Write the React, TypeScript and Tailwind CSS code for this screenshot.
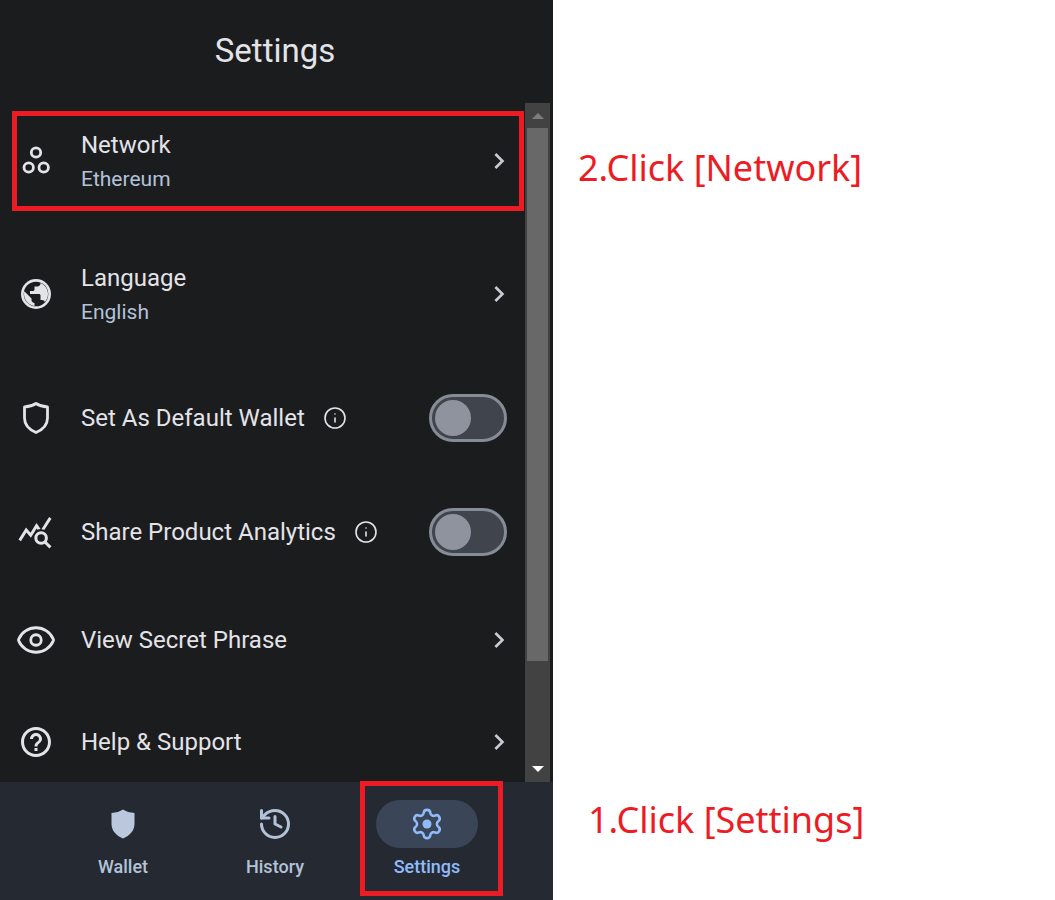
import { MdChevronRight, MdHelpOutline, MdQueryStats } from 'react-icons/md';
import { Eye, History, Info as InfoIcon } from 'lucide-react';
import { ReactNode } from 'react';

const NetworkIcon = () => (
  <svg width="30" height="30" viewBox="0 0 30 30" fill="none" stroke="#e3e3e8" strokeWidth="2.800">
    <circle cx="15" cy="6.500" r="4.700" />
    <circle cx="7.700" cy="21.500" r="4.700" />
    <circle cx="22.700" cy="21.500" r="4.700" />
  </svg>
);

const GlobeIcon = () => (
  <svg width="36" height="36" viewBox="0 0 24 24">
    <circle cx="12" cy="12" r="10" fill="#e3e3e8" />
    <circle cx="12" cy="12" r="8.200" fill="#1b1c1e" />
    <path d="M11 19.930c-3.950-.49-7-3.850-7-7.930 0-.62.08-1.210.21-1.790L9 15v1c0 1.100.9 2 2 2v1.930z" fill="#e3e3e8" />
    <path d="M17.900 17.390c-.26-.81-1-1.390-1.900-1.390h-1v-3c0-.55-.45-1-1-1H8v-2h2c.55 0 1-.45 1-1V7h2c1.100 0 2-.9 2-2v-.41c2.930 1.190 5 4.060 5 7.410 0 2.080-.8 3.970-2.100 5.390z" fill="#e3e3e8" />
  </svg>
);

const ShieldIcon = ({ filled }: { filled?: boolean }) => (
  <svg width="30" height="32" viewBox="0 0 30 32" fill={filled ? '#bac7dc' : 'none'} stroke={filled ? 'none' : '#e3e3e8'} strokeWidth="2.800" strokeLinejoin="round">
    <path d="M15 1.500c3 2 7 3.200 11.500 3.500v11c0 6.500-4.500 11.500-11.500 14.500C8 27.500 3.500 22.500 3.500 16V5C8 4.700 12 3.500 15 1.500z" />
  </svg>
);

const GearIcon = () => (
  <svg width="34" height="34" viewBox="0 0 24 24" fill="none" stroke="#90bbfb" strokeWidth="1.800" strokeLinecap="round" strokeLinejoin="round">
    <path d="M9.671 4.136a2.34 2.34 0 0 1 4.659 0 2.34 2.34 0 0 0 3.319 1.915 2.34 2.34 0 0 1 2.33 4.033 2.34 2.34 0 0 0 0 3.831 2.34 2.34 0 0 1-2.33 4.033 2.34 2.34 0 0 0-3.319 1.915 2.34 2.34 0 0 1-4.659 0 2.34 2.34 0 0 0-3.32-1.915 2.34 2.34 0 0 1-2.33-4.033 2.34 2.34 0 0 0 0-3.831A2.34 2.34 0 0 1 6.35 6.051a2.34 2.34 0 0 0 3.319-1.915" />
    <circle cx="12" cy="12" r="3.200" fill="#90bbfb" stroke="none" />
  </svg>
);

const Toggle = () => (
  <div className="w-[78px] h-12 rounded-full border-[3px] border-[#868c96] bg-[#40444c] p-[3px] shrink-0">
    <div className="w-9 h-9 rounded-full bg-[#8f939d]" />
  </div>
);

const Row = ({ icon, title, sub, right, className }: { icon: ReactNode; title: ReactNode; sub?: string; right: ReactNode; className: string }) => (
  <div className={`flex items-center pl-[18px] pr-[18px] ${className}`}>
    <div className="w-9 flex justify-center shrink-0">{icon}</div>
    <div className={`ml-[27px] flex-1 min-w-0 ${sub ? 'self-start' : ''}`}>
      <div className={`text-[24px] text-[#e3e3e8] ${sub ? 'leading-[35px]' : 'leading-[33px]'}`}>{title}</div>
      {sub && <div className="text-[21px] leading-[33px] text-[#b4c2d9]">{sub}</div>}
    </div>
    {right}
  </div>
);

const Chevron = () => <MdChevronRight size={32} className="text-[#c7cad1] -mr-[8px] shrink-0" />;

const Info = () => <InfoIcon size={24} strokeWidth={1.6} className="text-[#e3e3e8] ml-[18px] inline-block align-[-4px]" />;

const NavItem = ({ icon, label, active }: { icon: ReactNode; label: string; active?: boolean }) => (
  <div className="w-[152px] flex flex-col items-center">
    <div className={`w-[102px] h-12 rounded-full flex items-center justify-center ${active ? 'bg-[#3a4557]' : ''}`}>{icon}</div>
    <div className={`mt-[7px] text-[18px] leading-6 font-medium ${active ? 'text-[#90bbfb]' : 'text-[#b4c2d9]'}`}>{label}</div>
  </div>
);

export default function App() {
  return (
    <div className="relative w-[1055px] h-[900px] bg-white flex overflow-hidden font-['Roboto',sans-serif]">
      <div className="w-[553px] h-full bg-[#1b1c1e] flex flex-col shrink-0">
        <div className="h-[103px] pr-[3px] flex justify-center pt-[30px] shrink-0">
          <h1 className="text-[33px] leading-[42px] text-[#e3e3e8]">Settings</h1>
        </div>
        <div className="h-[679px] flex pr-[3px] shrink-0">
          <div className="flex-1 min-w-0">
            <Row className="h-[66px] mt-[25px]" icon={<NetworkIcon />} title="Network" sub="Ethereum" right={<Chevron />} />
            <Row className="h-[66px] mt-[67px]" icon={<GlobeIcon />} title="Language" sub="English" right={<Chevron />} />
            <Row className="h-12 mt-[67px]" icon={<ShieldIcon />} title={<>Set As Default Wallet<Info /></>} right={<Toggle />} />
            <Row className="h-12 mt-[66px]" icon={<MdQueryStats size={36} className="text-[#e3e3e8] -ml-[2px]" />} title={<>Share Product Analytics<Info /></>} right={<Toggle />} />
            <Row className="h-7 mt-[70px]" icon={<Eye size={42} strokeWidth={1.6} className="text-[#e3e3e8] shrink-0" />} title="View Secret Phrase" right={<Chevron />} />
            <Row className="h-7 mt-[74px]" icon={<MdHelpOutline size={36} className="text-[#e3e3e8]" />} title="Help & Support" right={<Chevron />} />
          </div>
          <div className="w-[25px] bg-[#424242] flex flex-col items-center shrink-0">
            <div className="h-[25px] flex items-center justify-center shrink-0">
              <div className="w-0 h-0 border-x-[6px] border-x-transparent border-b-[6px] border-b-[#7d7d7d]" />
            </div>
            <div className="w-[21px] h-[533px] bg-[#686868] shrink-0" />
            <div className="flex-1 flex items-end pb-[10px] justify-center">
              <div className="w-0 h-0 border-x-[6px] border-x-transparent border-t-[6px] border-t-white" />
            </div>
          </div>
        </div>
        <div className="flex-1 bg-[#252a32] flex justify-center pr-[3px] pt-[18px]">
          <NavItem icon={<ShieldIcon filled />} label="Wallet" />
          <NavItem icon={<History size={36} strokeWidth={2} className="text-[#b4c2d9]" />} label="History" />
          <NavItem icon={<GearIcon />} label="Settings" active />
        </div>
      </div>
      <div className="flex-1 relative font-['Noto_Sans',sans-serif] text-[36px] leading-[52px] text-[#ed1c24]">
        <div className="ml-[25px] mt-[142px]">2.Click [Network]</div>
        <div className="ml-[35px] mt-[600px]">1.Click [Settings]</div>
      </div>
      <div className="absolute left-3 top-[111px] w-[512px] h-[100px] border-[5px] border-[#ed1c24]" />
      <div className="absolute left-[360px] top-[781px] w-[143px] h-[115px] border-[5px] border-[#ed1c24]" />
    </div>
  );
}
